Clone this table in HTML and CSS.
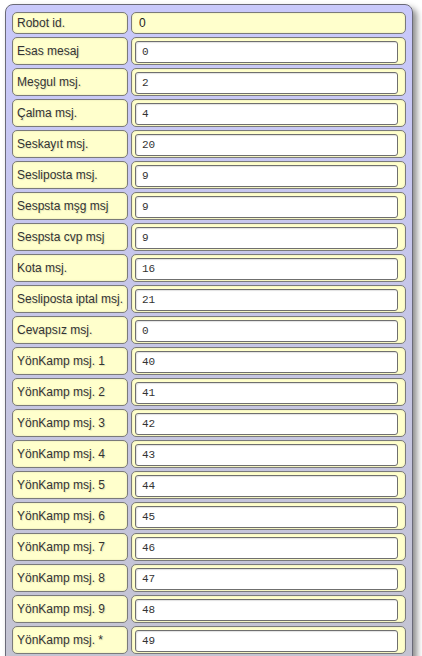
FILE: index.html
```html
<!DOCTYPE html>
<html>
<head>
<meta charset="utf-8">
<link rel="stylesheet" href="styles.css">
</head>
<body>
<div class="panel">
  <div class="grid">
    <div class="cell label">Robot id.</div>
    <div class="cell value first">0</div>

    <div class="cell label">Esas mesaj</div>
    <div class="cell value"><input class="field" value="0"></div>

    <div class="cell label">Meşgul msj.</div>
    <div class="cell value"><input class="field" value="2"></div>

    <div class="cell label">Çalma msj.</div>
    <div class="cell value"><input class="field" value="4"></div>

    <div class="cell label">Seskayıt msj.</div>
    <div class="cell value"><input class="field" value="20"></div>

    <div class="cell label">Sesliposta msj.</div>
    <div class="cell value"><input class="field" value="9"></div>

    <div class="cell label">Sespsta mşg msj</div>
    <div class="cell value"><input class="field" value="9"></div>

    <div class="cell label">Sespsta cvp msj</div>
    <div class="cell value"><input class="field" value="9"></div>

    <div class="cell label">Kota msj.</div>
    <div class="cell value"><input class="field" value="16"></div>

    <div class="cell label">Sesliposta iptal msj.</div>
    <div class="cell value"><input class="field" value="21"></div>

    <div class="cell label">Cevapsız msj.</div>
    <div class="cell value"><input class="field" value="0"></div>

    <div class="cell label">YönKamp msj. 1</div>
    <div class="cell value"><input class="field" value="40"></div>

    <div class="cell label">YönKamp msj. 2</div>
    <div class="cell value"><input class="field" value="41"></div>

    <div class="cell label">YönKamp msj. 3</div>
    <div class="cell value"><input class="field" value="42"></div>

    <div class="cell label">YönKamp msj. 4</div>
    <div class="cell value"><input class="field" value="43"></div>

    <div class="cell label">YönKamp msj. 5</div>
    <div class="cell value"><input class="field" value="44"></div>

    <div class="cell label">YönKamp msj. 6</div>
    <div class="cell value"><input class="field" value="45"></div>

    <div class="cell label">YönKamp msj. 7</div>
    <div class="cell value"><input class="field" value="46"></div>

    <div class="cell label">YönKamp msj. 8</div>
    <div class="cell value"><input class="field" value="47"></div>

    <div class="cell label">YönKamp msj. 9</div>
    <div class="cell value"><input class="field" value="48"></div>

    <div class="cell label">YönKamp msj. *</div>
    <div class="cell value"><input class="field" value="49"></div>
  </div>
</div>
</body>
</html>
```
FILE: styles.css
```css
html, body {
  margin: 0;
  padding: 0;
  background: #ffffff;
}
body {
  font-family: "Liberation Sans", Arial, sans-serif;
  font-size: 12px;
  color: #333;
  overflow: hidden;
}
.panel {
  box-sizing: border-box;
  margin: 4px 0 0 5px;
  width: 408px;
  border: 1px solid #6a6a78;
  border-radius: 8px;
  background: linear-gradient(to bottom, #c9c9fb 0px, #c6c6e6 330px, #c4c4d2 650px);
  box-shadow: 4px 4px 6px rgba(0, 0, 0, 0.45);
  padding: 7px 6px 12px 6px;
}
.grid {
  display: grid;
  grid-template-columns: 116px 1fr;
  grid-template-rows: 22px;
  grid-auto-rows: 28px;
  gap: 3px;
}
.cell {
  box-sizing: border-box;
  border: 1px solid #7a7a7a;
  border-radius: 5px;
  background: #ffffcc;
  box-shadow: inset 0 0 2px rgba(160, 160, 120, 0.35);
  display: flex;
  align-items: center;
}
.label {
  padding-left: 4px;
  color: #333;
  text-shadow: 1px 1px 1px rgba(0, 0, 0, 0.12);
  white-space: nowrap;
}
.value.first {
  padding-left: 7px;
  color: #222;
}
.value {
  padding: 0 7px 0 3px;
}
.field {
  box-sizing: border-box;
  width: 100%;
  height: 22px;
  margin: 1px 0 0 0;
  padding: 0 0 0 6px;
  border: 1px solid #6f6f6f;
  border-radius: 3px;
  background: #ffffff;
  box-shadow: inset 1px 1px 1px rgba(0, 0, 0, 0.12);
  font-family: "Liberation Mono", "Courier New", monospace;
  font-size: 11px;
  color: #333;
  outline: none;
}
```
